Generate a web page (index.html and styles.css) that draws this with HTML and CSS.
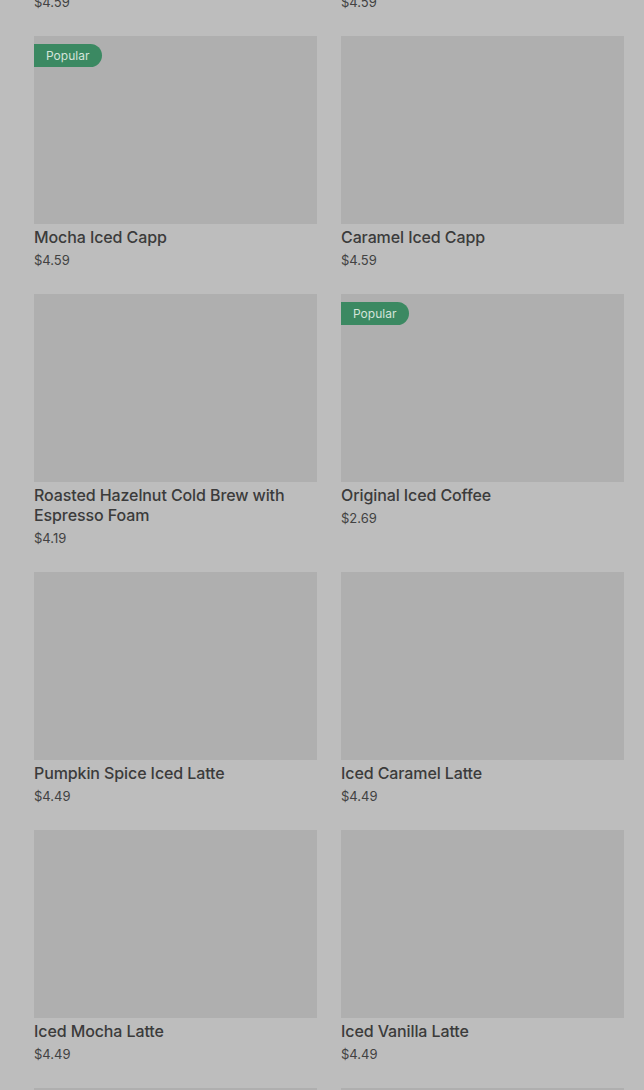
FILE: index.html
```html
<!DOCTYPE html>
<html lang="en">
<head>
<meta charset="utf-8">
<title>Menu</title>
<link rel="stylesheet" href="styles.css">
</head>
<body>
<main class="grid">
  <article class="card"><div class="thumb"></div><h3 class="name">Vanilla Iced Capp</h3><p class="price">$4.59</p></article>
  <article class="card"><div class="thumb"></div><h3 class="name">Iced Capp</h3><p class="price">$4.59</p></article>

  <article class="card"><div class="thumb"><span class="badge">Popular</span></div><h3 class="name">Mocha Iced Capp</h3><p class="price">$4.59</p></article>
  <article class="card"><div class="thumb"></div><h3 class="name">Caramel Iced Capp</h3><p class="price">$4.59</p></article>

  <article class="card"><div class="thumb"></div><h3 class="name">Roasted Hazelnut Cold Brew with Espresso Foam</h3><p class="price">$4.19</p></article>
  <article class="card"><div class="thumb"><span class="badge">Popular</span></div><h3 class="name">Original Iced Coffee</h3><p class="price">$2.69</p></article>

  <article class="card"><div class="thumb"></div><h3 class="name">Pumpkin Spice Iced Latte</h3><p class="price">$4.49</p></article>
  <article class="card"><div class="thumb"></div><h3 class="name">Iced Caramel Latte</h3><p class="price">$4.49</p></article>

  <article class="card"><div class="thumb"></div><h3 class="name">Iced Mocha Latte</h3><p class="price">$4.49</p></article>
  <article class="card"><div class="thumb"></div><h3 class="name">Iced Vanilla Latte</h3><p class="price">$4.49</p></article>

  <article class="card"><div class="thumb"></div><h3 class="name">Iced Latte</h3><p class="price">$4.29</p></article>
  <article class="card"><div class="thumb"></div><h3 class="name">Iced Cappuccino</h3><p class="price">$4.29</p></article>
</main>
</body>
</html>
```
FILE: styles.css
```css
html, body {
  margin: 0;
  padding: 0;
  background: #bdbdbd;
  overflow: hidden;
}
body {
  font-family: Inter, "Noto Sans", "Liberation Sans", sans-serif;
  color: #3a3a3a;
}
.grid {
  display: grid;
  grid-template-columns: 283px 283px;
  column-gap: 24px;
  row-gap: 25px;
  padding: 0 20px 0 34px;
  margin-top: -222px;
}
.card {
  display: flex;
  flex-direction: column;
  margin: 0;
}
.thumb {
  position: relative;
  height: 188px;
  background: #afafaf;
}
.badge {
  position: absolute;
  top: 8px;
  left: 0;
  height: 23px;
  line-height: 23px;
  padding: 0 13px 0 12px;
  background: #3b8962;
  color: #d4e4da;
  font-size: 12px;
  border-radius: 0 12px 12px 0;
}
.name {
  margin: 3px 0 0;
  font-size: 16px;
  line-height: 20px;
  font-weight: 500;
  letter-spacing: -0.1px;
  color: #3b3b3b;
}
.price {
  margin: 4px 0 0;
  font-size: 13px;
  line-height: 18px;
  color: #424242;
}
```
